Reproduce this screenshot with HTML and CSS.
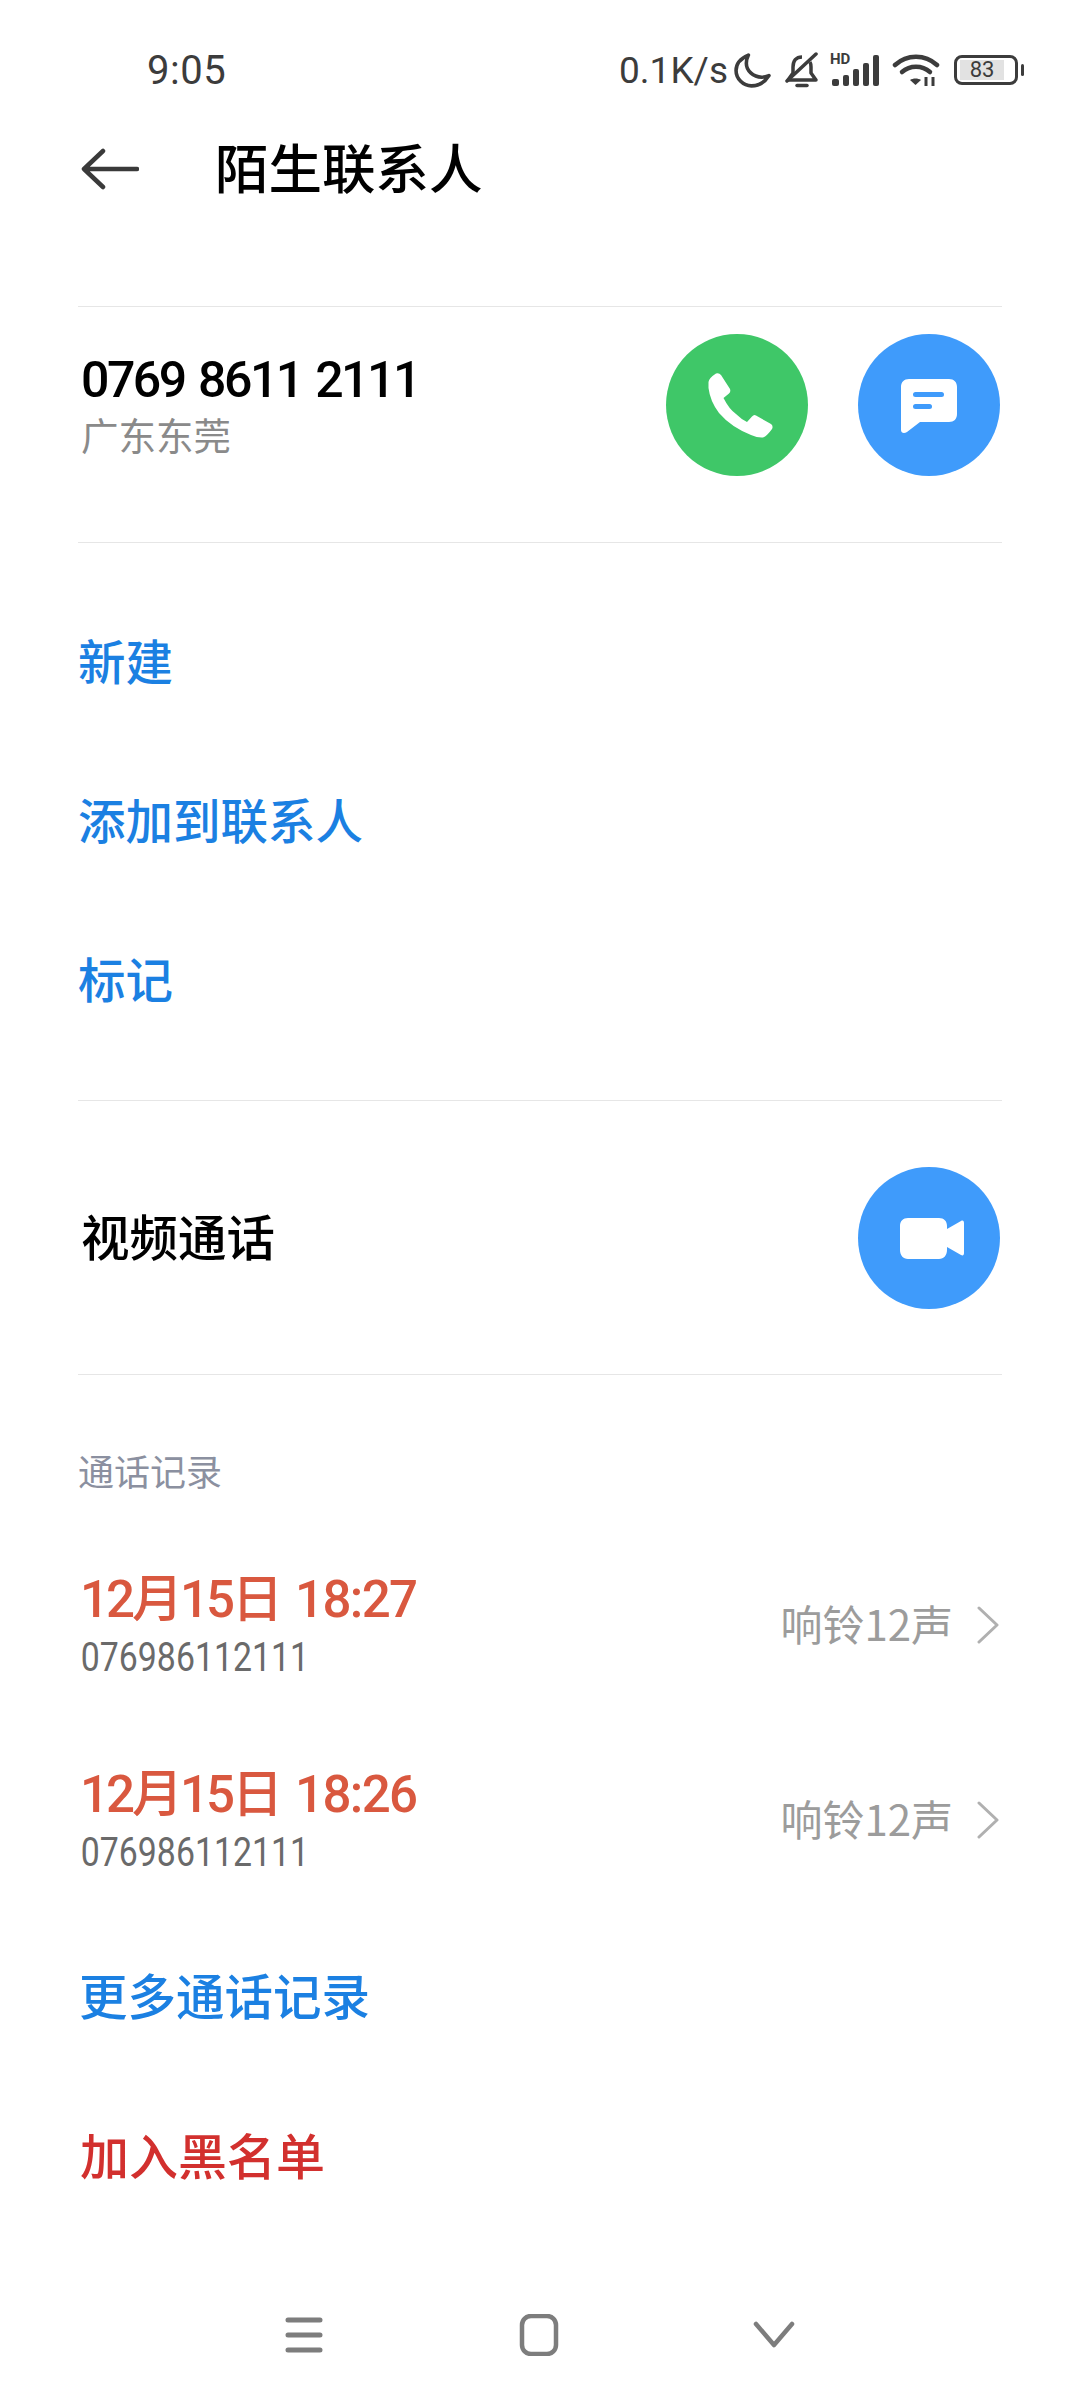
FILE: index.html
```html
<!DOCTYPE html>
<html lang="zh-CN">
<head>
<meta charset="utf-8">
<title>陌生联系人</title>
<link rel="stylesheet" href="styles.css">
</head>
<body>
<div class="page">
  <div class="statusbar">
    <span class="clock">9:05</span>
    <div class="status-right">
      <span class="speed">0.1K/s</span>
      <svg class="si moon" viewBox="0 0 36 34"><path d="M14 2C7 5 2 10 2 17c0 8 7 15 15 15 7 0 13-3.500 17-10-2.500 1-5 1.500-7 1.500C18.500 23.500 12 17 12 10c0-3 .8-5.500 2-8z" fill="none" stroke="#3c3c3c" stroke-width="3.500" stroke-linejoin="round"/></svg>
      <svg class="si bell" viewBox="0 0 34 36"><path d="M17 5c-6 0-9 4-9 10v6l-5 7h28l-5-7v-6c0-2-.5-4-1-5" fill="none" stroke="#3c3c3c" stroke-width="3.500" stroke-linejoin="round"/><path d="M2 29 31 2" stroke="#3c3c3c" stroke-width="3.500" stroke-linecap="round"/><path d="M12 33.500h10" stroke="#3c3c3c" stroke-width="3.500" stroke-linecap="round"/></svg>
      <div class="signal">
        <span class="hd">HD</span>
        <svg class="bars" viewBox="0 0 50 32"><g fill="#3c3c3c"><rect x="2" y="25" width="7" height="7" rx="2"/><rect x="13" y="21" width="6" height="11" rx="2"/><rect x="23" y="15" width="6" height="17" rx="2"/><rect x="33" y="9" width="6" height="23" rx="2"/><rect x="43" y="1" width="6" height="31" rx="2"/></g></svg>
      </div>
      <svg class="si wifi" viewBox="0 0 48 32"><g fill="none" stroke="#3c3c3c" stroke-width="4.500" stroke-linecap="round"><path d="M3 11c12-11 30-11 42 0"/><path d="M10 18c8-7 20-7 28 0"/></g><path d="M18 26c3-2 8-2 11 0l-5.500 5z" fill="#3c3c3c"/><path d="M34 23v9M41 23v9" stroke="#3c3c3c" stroke-width="3"/></svg>
      <div class="battery"><div class="battery-body"><span class="battery-fill">83</span></div><span class="battery-tip"></span></div>
    </div>
  </div>

  <header class="topbar">
    <svg class="back" viewBox="0 0 58 42"><path d="M56 21H4M22 3 3 21l19 18" fill="none" stroke="#3a3a3a" stroke-width="4.500" stroke-linecap="round" stroke-linejoin="round"/></svg>
    <h1 class="title">陌生联系人</h1>
  </header>

  <section class="contact">
    <div class="contact-text">
      <div class="phone">0769 8611 2111</div>
      <div class="region">广东东莞</div>
    </div>
    <div class="round green">
      <svg class="ic" viewBox="0 0 142 142"><path d="M42.500 48Q43 44 50 39.500 53 38.500 55 41L64 55Q65 58 63 59.500L57.500 64Q63 75 70 80 75 85 81 88L86 82.500Q88 80 90 81.500L105 90Q107.500 92 106 95 101 102 97 103.500 92 104 85 101 65 93 53 79 44 67 42.500 54Z" fill="#fff"/></svg>
    </div>
    <div class="round blue">
      <svg class="ic" viewBox="0 0 142 142"><path d="M51 45h40c5 0 8 3 8 8v27c0 5-3 8-8 8H62L49 98c-3 2-6 1-6-2V53c0-5 3-8 8-8z" fill="#fff"/><rect x="55" y="58" width="31" height="5" rx="2.500" fill="#3f9bfb"/><rect x="55" y="70" width="19" height="5" rx="2.500" fill="#3f9bfb"/></svg>
    </div>
  </section>

  <nav class="actions">
    <div class="action">新建</div>
    <div class="action">添加到联系人</div>
    <div class="action">标记</div>
  </nav>

  <section class="video">
    <span class="video-label">视频通话</span>
    <div class="round blue">
      <svg class="ic" viewBox="0 0 142 142"><path d="M50 51h31c5 0 8 3 8 8v3l14-8c2-1 3 0 3 2v30c0 2-1 3-3 2l-14-8v3c0 5-3 9-8 9H50c-5 0-8-4-8-9V59c0-5 3-8 8-8z" fill="#fff"/></svg>
    </div>
  </section>

  <div class="log-heading">通话记录</div>

  <div class="log-row">
    <div class="log-main">
      <div class="log-time"><span class="log-date">12月15日</span> 18:27</div>
      <div class="log-number">076986112111</div>
    </div>
    <span class="log-note">响铃12声</span>
    <svg class="chev" viewBox="0 0 24 38"><path d="M3 2 21 19 3 36" fill="none" stroke="#b0b0b0" stroke-width="3" stroke-linecap="round" stroke-linejoin="round"/></svg>
  </div>
  <div class="log-row">
    <div class="log-main">
      <div class="log-time"><span class="log-date">12月15日</span> 18:26</div>
      <div class="log-number">076986112111</div>
    </div>
    <span class="log-note">响铃12声</span>
    <svg class="chev" viewBox="0 0 24 38"><path d="M3 2 21 19 3 36" fill="none" stroke="#b0b0b0" stroke-width="3" stroke-linecap="round" stroke-linejoin="round"/></svg>
  </div>

  <div class="action more">更多通话记录</div>
  <div class="action danger">加入黑名单</div>

  <div class="navbar">
    <svg class="nav-ic" viewBox="0 0 42 42"><path d="M5 6h32M5 21h32M5 36h32" stroke="#7d7d7d" stroke-width="5" stroke-linecap="round"/></svg>
    <svg class="nav-ic" viewBox="0 0 42 42"><rect x="4" y="2" width="34" height="38" rx="9" fill="none" stroke="#7d7d7d" stroke-width="4.500"/></svg>
    <svg class="nav-ic" viewBox="0 0 42 42"><path d="M3 10l18 21 18-21" fill="none" stroke="#7d7d7d" stroke-width="4.500" stroke-linecap="round" stroke-linejoin="round"/></svg>
  </div>
</div>
</body>
</html>
```

FILE: styles.css
```css
* { box-sizing: border-box; }
html, body { margin: 0; padding: 0; background: #fff; }
body { font-family: "Roboto", "Noto Sans CJK SC", sans-serif; }
.page { width: 1080px; height: 2400px; overflow: hidden; display: flex; flex-direction: column; background: #fff; }

.statusbar { height: 140px; padding: 0 56px 0 147px; display: flex; align-items: center; justify-content: space-between; color: #3c3c3c; }
.clock { font-size: 40px; letter-spacing: 0.5px; }
.status-right { display: flex; align-items: center; }
.speed { font-size: 37px; margin-right: 6px; letter-spacing: 0; }
.si { display: block; }
.moon { width: 37px; height: 35px; margin-right: 14px; }
.bell { width: 34px; height: 36px; margin-right: 11px; }
.signal { width: 50px; height: 32px; margin-right: 12px; display: flex; align-items: flex-start; position: relative; }
.hd { position: absolute; left: 0; top: -3px; font-size: 15px; line-height: 16px; font-weight: 700; color: #3c3c3c; }
.bars { display: block; width: 50px; height: 32px; }
.wifi { width: 48px; height: 32px; margin-right: 14px; }
.battery { display: flex; align-items: center; gap: 3px; }
.battery-body { width: 64px; height: 30px; border: 3px solid #3c3c3c; border-radius: 8px; padding: 2px 3px; display: flex; }
.battery-fill { width: 44px; background: #e2e2e2; font-size: 22px; line-height: 20px; text-align: center; color: #3c3c3c; }
.battery-tip { width: 3px; height: 12px; background: #3c3c3c; border-radius: 2px; }

.topbar { height: 60px; padding-left: 81px; display: flex; align-items: center; }
.back { width: 58px; height: 42px; flex: none; margin-top: -2px; margin-right: 76px; }
.title { margin: 0 0 8px; font-family: "Noto Sans CJK SC", sans-serif; font-size: 53.500px; font-weight: 500; color: #000; line-height: 60px; }

.contact { margin: 106px 78px 0; height: 237px; padding: 27px 2px 0 0; border-top: 1.5px solid #e6e6e6; border-bottom: 1.5px solid #e6e6e6; display: flex; align-items: flex-start; }
.contact-text { flex: 1; padding: 16px 0 0 3px; }
.phone { font-size: 50px; font-weight: 500; line-height: 60px; letter-spacing: -2.500px; word-spacing: 3.500px; color: #000; }
.region { font-family: "Noto Sans CJK SC", sans-serif; font-size: 37.500px; line-height: 48px; color: #8a8a8a; }
.round { width: 142px; height: 142px; border-radius: 50%; flex: none; }
.round + .round { margin-left: 50px; }
.green { background: #3fc768; }
.blue { background: #3f9bfb; }
.ic { display: block; width: 142px; height: 142px; }

.actions { margin: 0 78px; height: 558px; padding: 40px 0 40px; border-bottom: 1.5px solid #e6e6e6; display: flex; flex-direction: column; }
.action { height: 159px; padding-bottom: 6px; display: flex; align-items: center; font-family: "Noto Sans CJK SC", sans-serif; font-size: 47.500px; font-weight: 500; color: #1b80e2; }

.video { margin: 0 78px; height: 274px; padding: 0 2px 0 3px; border-bottom: 1.5px solid #e6e6e6; display: flex; align-items: center; justify-content: space-between; }
.video-label { margin-bottom: 6px; font-family: "Noto Sans CJK SC", sans-serif; font-size: 48.500px; font-weight: 500; color: #000; }

.log-heading { margin: 0 78px; height: 154px; padding-top: 74px; font-family: "Noto Sans CJK SC", sans-serif; font-size: 36px; line-height: 42px; color: #8b90a0; }

.log-row { margin: 0 80px; height: 195px; display: flex; align-items: center; }
.log-main { flex: 1; margin-top: -1px; }
.log-time { font-size: 51px; font-weight: 500; line-height: 62px; letter-spacing: -1.600px; color: #d9583f; }
.log-date { letter-spacing: -3px; margin-right: 4px; }
.log-number { font-size: 41px; line-height: 52px; color: #6a6a6a; padding-left: 1px; transform: scaleX(0.825); transform-origin: left center; }
.log-note { margin: 0 23px 8px 0; font-family: "Noto Sans CJK SC", sans-serif; font-size: 42px; color: #9c9c9c; font-weight: 400; }
.chev { width: 24px; height: 38px; flex: none; margin-top: -4px; }

.more { margin: 0 79px; height: 160px; padding-bottom: 10px; font-size: 48.500px; }
.danger { margin: 0 80px; height: 160px; padding-bottom: 12px; font-size: 49px; color: #d2302e; }

.navbar { margin-top: 75px; height: 42px; padding: 0 285px 0 283px; display: flex; align-items: center; justify-content: space-between; }
.nav-ic { width: 42px; height: 42px; }
```
